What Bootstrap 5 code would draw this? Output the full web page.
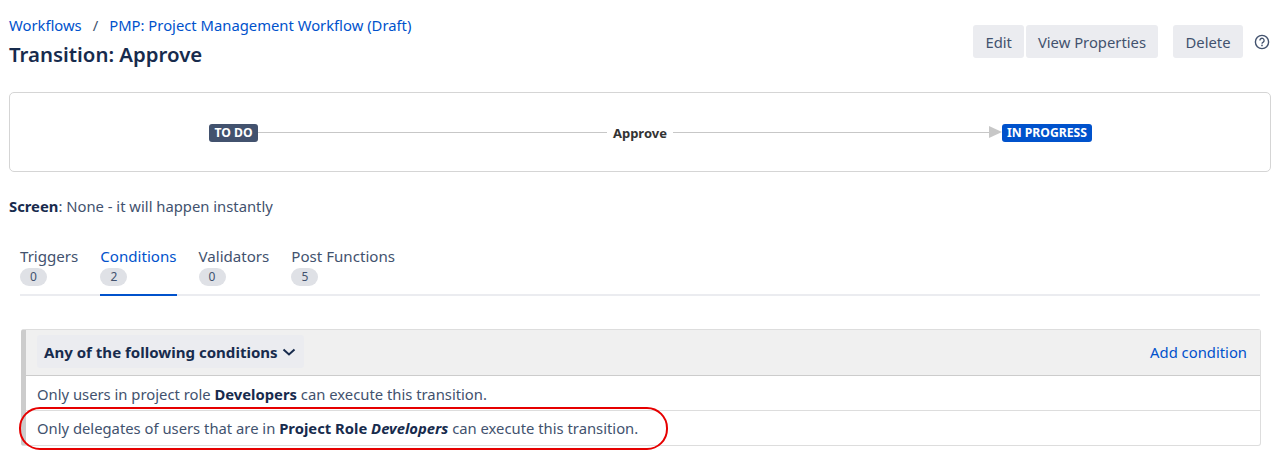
<!DOCTYPE html>
<html lang="en">
<head>
    <meta charset="UTF-8">
    <meta name="viewport" content="width=device-width, initial-scale=1.0">
    <title>Transition: Approve</title>
    <link href="https://cdn.jsdelivr.net/npm/bootstrap@5.3.0/dist/css/bootstrap.min.css" rel="stylesheet">
    <style>
        body {
            font-family: "Noto Sans", "Open Sans", sans-serif;
            font-size: 14.8px;
            line-height: 20px;
            color: #172b4d;
        }
        a { color: #0052cc; text-decoration: none; }
        .page-wrap { padding: 15px 9px 0 9px; height: 459px; overflow: hidden; }
        .crumbs { height: 20px; }
        .crumb-sep { margin: 0 11px; color: #42526e; }
        .page-title { font-size: 20.4px; line-height: 28px; font-weight: 600; margin: 5px 0 0; color: #172b4d; }
        .top-actions { padding-top: 10px; }
        .act-btn {
            background: #ebecf0;
            color: #42526e;
            border: 0;
            border-radius: 3px;
            height: 33px;
            padding: 0 12px;
            font-size: 14.8px;
        }
        .act-gap { margin-left: 2px; margin-right: 15px; }
        .act-del { padding: 0 12.5px; }
        .help-icon { width: 16px; height: 16px; margin: 9px 1px 0 11px; }
        .diagram-box {
            border: 1px solid #d5d5d5;
            border-radius: 5px;
            height: 80px;
            margin-top: 24px;
            padding: 2px 178px 0 199px;
        }
        .status-pill {
            font-size: 12.2px;
            line-height: 18px;
            height: 18px;
            font-weight: 700;
            color: #fff;
            border-radius: 3px;
            padding: 0 5px;
            white-space: nowrap;
            text-align: center;
        }
        .status-todo { background: #42526e; min-width: 49px; }
        .status-prog { background: #0052cc; }
        .flow-line { height: 1px; background: #c7c7c7; margin-top: -2px; }
        .line-left { flex: 349 1 0; }
        .line-right { flex: 316 1 0; }
        .flow-label { font-size: 13px; font-weight: 700; color: #333; padding: 0 6px; }
        .flow-arrow {
            width: 0; height: 0;
            margin-top: -2px;
            border-left: 13px solid #c7c7c7;
            border-top: 6px solid transparent;
            border-bottom: 6px solid transparent;
        }
        .screen-line { margin-top: 24px; color: #42526e; }
        .screen-line b { color: #172b4d; font-weight: 700; }
        .tab-strip {
            margin: 30px 11px 0;
            border-bottom: 2px solid #ebecf0;
            gap: 22px;
            height: 50px;
            font-size: 15.1px;
        }
        .tab-item { color: #42526e; height: 50px; }
        .tab-item.is-on { color: #0052cc; border-bottom: 2px solid #0052cc; }
        .tab-count {
            display: block;
            width: 27px;
            height: 18px;
            line-height: 18px;
            margin-top: 2px;
            border-radius: 9px;
            background: #dfe1e6;
            color: #42526e;
            font-size: 12px;
            text-align: center;
        }
        .cond-panel {
            margin: 33px 10px 0 12px;
            border: 1px solid #ddd;
            border-left: 5px solid #ccc;
            border-radius: 3px;
            position: relative;
        }
        .cond-head {
            background: #f0f0f0;
            height: 46px;
            border-bottom: 1px solid #ccc;
            padding: 0 13px 2px 11px;
        }
        .cond-drop {
            background: #ebecf0;
            color: #172b4d;
            font-weight: 700;
            font-size: 15.05px;
            border: 0;
            border-radius: 3px;
            height: 33px;
            padding: 0 7px;
        }
        .cond-drop svg { margin-left: -1px; }
        .cond-row { height: 34px; padding: 1px 11px 0; color: #42526e; display: flex; align-items: center; }
        .cond-row + .cond-row { border-top: 1px solid #ddd; height: 35px; padding-top: 0; }
        .cond-row b { color: #172b4d; font-weight: 700; white-space: pre; }
        .cond-row span { white-space: pre; }
        .red-oval {
            position: absolute;
            left: -7px;
            top: 77px;
            width: 649px;
            height: 43px;
            border: 2px solid #e60000;
            border-radius: 21px;
            pointer-events: none;
        }
    </style>
</head>
<body>
    <div class="page-wrap">
        <div class="d-flex justify-content-between">
            <div>
                <div class="crumbs"><a href="#">Workflows</a><span class="crumb-sep">/</span><a href="#">PMP: Project Management Workflow (Draft)</a></div>
                <h1 class="page-title">Transition: Approve</h1>
            </div>
            <div class="top-actions d-flex align-items-start">
                <button class="act-btn">Edit</button>
                <button class="act-btn act-gap">View Properties</button>
                <button class="act-btn act-del">Delete</button>
                <svg class="help-icon" viewBox="0 0 16 16" fill="none">
                    <circle cx="8" cy="8" r="6.6" stroke="#42526e" stroke-width="1.4"/>
                    <path d="M5.9 6.4a2.1 2.1 0 1 1 3.3 1.7c-.8.5-1.2.9-1.2 1.6" stroke="#42526e" stroke-width="1.3"/>
                    <circle cx="8" cy="11.4" r=".85" fill="#42526e"/>
                </svg>
            </div>
        </div>

        <div class="diagram-box d-flex align-items-center">
            <span class="status-pill status-todo">TO DO</span>
            <div class="flow-line line-left"></div>
            <span class="flow-label">Approve</span>
            <div class="flow-line line-right"></div>
            <div class="flow-arrow"></div>
            <span class="status-pill status-prog">IN PROGRESS</span>
        </div>

        <div class="screen-line"><b>Screen</b>: None - it will happen instantly</div>

        <div class="tab-strip d-flex">
            <div class="tab-item">Triggers<span class="tab-count">0</span></div>
            <div class="tab-item is-on">Conditions<span class="tab-count">2</span></div>
            <div class="tab-item">Validators<span class="tab-count">0</span></div>
            <div class="tab-item">Post Functions<span class="tab-count">5</span></div>
        </div>

        <div class="cond-panel">
            <div class="cond-head d-flex align-items-center justify-content-between">
                <button class="cond-drop d-flex align-items-center gap-1">Any of the following conditions
                    <svg width="16" height="16" viewBox="0 0 16 16" fill="none"><path d="M2.5 5.5 8 10.5l5.5-5" stroke="#172b4d" stroke-width="2"/></svg>
                </button>
                <a href="#">Add condition</a>
            </div>
            <div class="cond-row"><span>Only users in project role </span><b>Developers</b><span> can execute this transition.</span></div>
            <div class="cond-row"><span>Only delegates of users that are in </span><b>Project Role <i>Developers</i></b><span> can execute this transition.</span></div>
            <div class="red-oval"></div>
        </div>
    </div>

    <script src="https://cdn.jsdelivr.net/npm/bootstrap@5.3.0/dist/js/bootstrap.bundle.min.js"></script>
</body>
</html>
